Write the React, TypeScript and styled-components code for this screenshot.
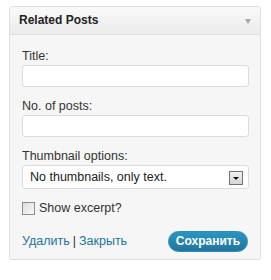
import { styled, createGlobalStyle } from 'styled-components';

const GlobalStyle = createGlobalStyle`
  html, body {
    margin: 0;
    padding: 0;
    background: #fff;
  }

  body {
    font-family: 'Liberation Sans', Arial, sans-serif;
    color: #333;
  }
`;

const App = () => {
  return (
    <Page>
      <GlobalStyle />
      <Widget>
        <WidgetHeader>
          <WidgetTitle>Related Posts</WidgetTitle>
          <ToggleArrow />
        </WidgetHeader>
        <WidgetBody>
          <Field>
            <Label htmlFor="rp-title">Title:</Label>
            <TextInput id="rp-title" type="text" />
          </Field>
          <Field>
            <Label htmlFor="rp-count">No. of posts:</Label>
            <TextInput id="rp-count" type="text" />
          </Field>
          <Field>
            <Label htmlFor="rp-thumb">Thumbnail options:</Label>
            <SelectWrap>
              <Select id="rp-thumb" defaultValue="none">
                <option value="none">No thumbnails, only text.</option>
                <option value="small">Small thumbnails</option>
              </Select>
              <SelectButton>
                <SelectArrow />
              </SelectButton>
            </SelectWrap>
          </Field>
          <CheckRow>
            <CheckBox type="checkbox" id="rp-excerpt" />
            <label htmlFor="rp-excerpt">Show excerpt?</label>
          </CheckRow>
          <Footer>
            <Links>
              <Link href="#">Удалить</Link>
              <Separator>|</Separator>
              <Link href="#">Закрыть</Link>
            </Links>
            <SaveButton type="button">Сохранить</SaveButton>
          </Footer>
        </WidgetBody>
      </Widget>
    </Page>
  );
};

export default App;

const Page = styled.div`
  width: 271px;
  height: 280px;
  padding: 6px 0 0 9px;
  box-sizing: border-box;
`;

const Widget = styled.div`
  width: 252px;
  box-sizing: border-box;
  border: 1px solid #dfdfdf;
  border-radius: 3px;
  background: #f6f6f6;
  box-shadow: 0 1px 0 #fff inset;
`;

const WidgetHeader = styled.div`
  display: flex;
  align-items: center;
  justify-content: space-between;

  height: 27px;
  padding: 0 9px 0 9px;
  border-bottom: 1px solid #dfdfdf;
  border-radius: 3px 3px 0 0;
  background: linear-gradient(to bottom, #f9f9f9, #ececec);
`;

const WidgetTitle = styled.div`
  color: #222;
  font-size: 12px;
  font-weight: 700;
  line-height: 27px;
`;

const ToggleArrow = styled.span`
  width: 0;
  height: 0;
  margin-top: 1px;
  border-left: 3px solid transparent;
  border-right: 3px solid transparent;
  border-top: 5px solid #a8a8a8;
`;

const WidgetBody = styled.div`
  padding: 14px 11px 7px 12px;
`;

const Field = styled.div`
  display: flex;
  flex-direction: column;
  margin-bottom: 12px;
`;

const Label = styled.label`
  margin-bottom: 1px;
  font-size: 12.5px;
  line-height: 15px;
`;

const TextInput = styled.input`
  width: 100%;
  height: 22px;
  box-sizing: border-box;
  margin: 0;
  padding: 2px 6px;
  border: 1px solid #dcdcdc;
  border-radius: 3px;
  background: #fff;
  font-family: inherit;
  font-size: 12.5px;
  outline: none;
`;

const SelectWrap = styled.div`
  position: relative;
  width: 100%;
  height: 24px;
`;

const Select = styled.select`
  appearance: none;
  width: 100%;
  height: 24px;
  box-sizing: border-box;
  margin: 0;
  padding: 0 24px 0 7px;
  border: 1px solid #dcdcdc;
  border-radius: 3px;
  background: #fff;
  color: #222;
  font-family: inherit;
  font-size: 12.5px;
  outline: none;
`;

const SelectButton = styled.span`
  position: absolute;
  top: 6px;
  right: 6px;

  display: flex;
  align-items: center;
  justify-content: center;

  width: 14px;
  height: 14px;
  box-sizing: border-box;
  border: 1px solid #707070;
  background: linear-gradient(to bottom, #f2f2f2, #d6d6d6);
  pointer-events: none;
`;

const SelectArrow = styled.span`
  width: 0;
  height: 0;
  margin-top: 1px;
  border-left: 3px solid transparent;
  border-right: 3px solid transparent;
  border-top: 3px solid #111;
`;

const CheckRow = styled.div`
  display: flex;
  align-items: center;
  gap: 4px;

  margin-top: 8px;
  font-size: 12.5px;
  line-height: 15px;
`;

const CheckBox = styled.input`
  appearance: none;
  width: 13px;
  height: 13px;
  margin: 0;
  border: 1px solid #8f8f8f;
  background: linear-gradient(135deg, #dcdcdc, #fbfbfb);
`;

const Footer = styled.div`
  display: flex;
  align-items: center;
  justify-content: space-between;

  margin-top: 15px;
  padding-right: 1px;
`;

const Links = styled.div`
  display: flex;
  align-items: center;
  gap: 3px;
  font-size: 12.5px;
  line-height: 15px;
`;

const Link = styled.a`
  color: #21759b;
  text-decoration: none;
`;

const Separator = styled.span`
  color: #333;
`;

const SaveButton = styled.button`
  width: 80px;
  height: 21px;
  padding: 0;
  border: 1px solid #298cba;
  border-radius: 11px;
  background: linear-gradient(to bottom, #2a95c5, #21759b);
  color: #fff;
  font-family: inherit;
  font-size: 12px;
  font-weight: 700;
  line-height: 19px;
  cursor: pointer;
`;
